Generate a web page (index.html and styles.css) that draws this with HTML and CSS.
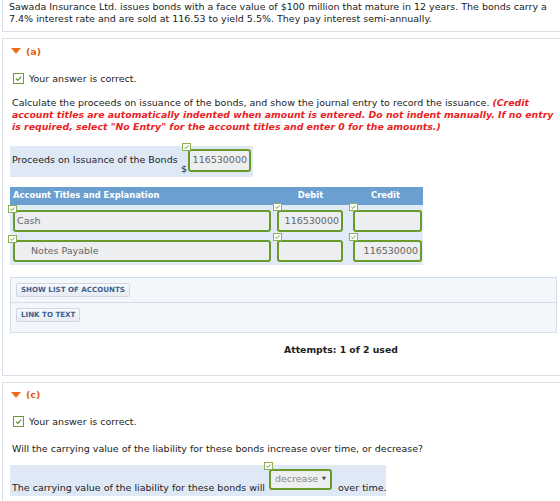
FILE: index.html
```html
<!DOCTYPE html>
<html>
<head>
    <title>Bonds Question</title>
    <link rel="stylesheet" href="styles.css">
</head>
<body>
    <div class="page">
        <!-- Question text -->
        <div class="panel intro">
            <p>Sawada Insurance Ltd. issues bonds with a face value of $100 million that mature in 12 years. The bonds carry a 7.4% interest rate and are sold at 116.53 to yield 5.5%. They pay interest semi-annually.</p>
        </div>

        <!-- Part (a) -->
        <div class="panel part">
            <div class="part-title"><span class="arrow"></span>(a)</div>
            <div class="status">
                <span class="checkbox"><svg viewBox="0 0 9 9"><path d="M2 4.6 L3.8 6.4 L7.2 2.6"/></svg></span>
                Your answer is correct.
            </div>
            <p class="prompt">Calculate the proceeds on issuance of the bonds, and show the journal entry to record the issuance. <em class="note">(Credit account titles are automatically indented when amount is entered. Do not indent manually. If no entry is required, select "No Entry" for the account titles and enter 0 for the amounts.)</em></p>

            <div class="answer-row proceeds">
                <span class="label">Proceeds on Issuance of the Bonds</span>
                <span class="dollar">$</span>
                <div class="field-wrap">
                    <span class="tag"><svg viewBox="0 0 7 6"><path d="M1.4 3.1 L2.9 4.4 L5.6 1.5"/></svg></span>
                    <div class="field num">116530000</div>
                </div>
            </div>

            <div class="journal">
                <div class="jhead">
                    <span class="col-title">Account Titles and Explanation</span>
                    <span class="col-amt">Debit</span>
                    <span class="col-amt">Credit</span>
                </div>
                <div class="jrow">
                    <div class="field-wrap acct">
                        <span class="tag"><svg viewBox="0 0 7 6"><path d="M1.4 3.1 L2.9 4.4 L5.6 1.5"/></svg></span>
                        <div class="field">Cash</div>
                    </div>
                    <div class="field-wrap debit">
                        <span class="tag"><svg viewBox="0 0 7 6"><path d="M1.4 3.1 L2.9 4.4 L5.6 1.5"/></svg></span>
                        <div class="field num">116530000</div>
                    </div>
                    <div class="field-wrap credit">
                        <span class="tag"><svg viewBox="0 0 7 6"><path d="M1.4 3.1 L2.9 4.4 L5.6 1.5"/></svg></span>
                        <div class="field num"></div>
                    </div>
                </div>
                <div class="jrow">
                    <div class="field-wrap acct">
                        <span class="tag"><svg viewBox="0 0 7 6"><path d="M1.4 3.1 L2.9 4.4 L5.6 1.5"/></svg></span>
                        <div class="field indent">Notes Payable</div>
                    </div>
                    <div class="field-wrap debit">
                        <span class="tag"><svg viewBox="0 0 7 6"><path d="M1.4 3.1 L2.9 4.4 L5.6 1.5"/></svg></span>
                        <div class="field num"></div>
                    </div>
                    <div class="field-wrap credit">
                        <span class="tag"><svg viewBox="0 0 7 6"><path d="M1.4 3.1 L2.9 4.4 L5.6 1.5"/></svg></span>
                        <div class="field num">116530000</div>
                    </div>
                </div>
            </div>

            <div class="links">
                <div class="link-row"><button class="btn">SHOW LIST OF ACCOUNTS</button></div>
                <div class="link-row"><button class="btn">LINK TO TEXT</button></div>
            </div>

            <div class="attempts">Attempts: 1 of 2 used</div>
        </div>

        <!-- Part (c) -->
        <div class="panel part">
            <div class="part-title"><span class="arrow"></span>(c)</div>
            <div class="status">
                <span class="checkbox"><svg viewBox="0 0 9 9"><path d="M2 4.6 L3.8 6.4 L7.2 2.6"/></svg></span>
                Your answer is correct.
            </div>
            <p class="prompt prompt-c">Will the carrying value of the liability for these bonds increase over time, or decrease?</p>

            <div class="answer-row choice">
                <span class="inline-text">The carrying value of the liability for these bonds will</span>
                <div class="field-wrap select-wrap">
                    <span class="tag"><svg viewBox="0 0 7 6"><path d="M1.4 3.1 L2.9 4.4 L5.6 1.5"/></svg></span>
                    <div class="select">decrease<span class="caret">&#9660;</span></div>
                </div>
                <span class="inline-text">over time.</span>
            </div>
        </div>
    </div>
</body>
</html>
```

FILE: styles.css
```css
* {
    box-sizing: border-box;
}

body {
    margin: 0;
    font-family: "DejaVu Sans", Verdana, sans-serif;
    font-size: 9.5px;
    line-height: 11.7px;
    color: #222;
    background: #fff;
    overflow: hidden;
}

.page {
    width: 570px;
    margin-left: 2px;
}

.panel {
    border: 1px solid #d9e0e8;
    background: #fff;
    margin-bottom: 6px;
}

.intro {
    border-top: 0;
    padding: 1px 6px 7px;
}

.intro p {
    margin: 0;
    width: 552px;
}

.part {
    padding: 6px 0 19px 7px;
}

.part-title {
    display: flex;
    align-items: center;
    gap: 5px;
    height: 12px;
    padding-left: 1px;
    color: #e0601c;
    font-size: 9.5px;
    font-weight: bold;
}

.arrow {
    width: 0;
    height: 0;
    border-left: 5px solid transparent;
    border-right: 5px solid transparent;
    border-top: 6px solid #f26b1d;
}

.status {
    display: flex;
    align-items: center;
    gap: 5px;
    height: 12px;
    margin-top: 15px;
    padding-left: 3px;
}

.checkbox {
    width: 11px;
    height: 11px;
    border: 1px solid #6c9b30;
    background: #fff;
    display: flex;
}

.checkbox svg {
    width: 9px;
    height: 9px;
    fill: none;
    stroke: #5a8f25;
    stroke-width: 1.2;
}

.prompt {
    margin: 13px 0 0 2px;
    width: 548px;
}

.prompt-c {
    margin-top: 15px;
}

.note {
    color: #e8231f;
    font-size: 9.35px;
    font-weight: bold;
}

.answer-row {
    display: flex;
    height: 31px;
    padding-left: 2px;
    background: #dfe9f6;
    white-space: nowrap;
}

.proceeds {
    width: 243px;
    margin-top: 13px;
}

.proceeds .label {
    width: 169px;
    align-self: center;
    margin-bottom: 2px;
}

.proceeds .dollar {
    width: 7px;
    align-self: flex-end;
    margin-bottom: 2px;
}

.proceeds .field-wrap {
    width: 63px;
    margin-top: 3px;
}

.proceeds .field {
    height: 23px;
}

.field-wrap {
    position: relative;
}

.tag {
    position: absolute;
    left: -6px;
    top: -6px;
    z-index: 1;
    width: 9px;
    height: 8px;
    border: 1px solid #8db050;
    background: #fff;
    display: flex;
}

.tag svg {
    width: 7px;
    height: 6px;
    fill: none;
    stroke: #6a9a2c;
    stroke-width: 1;
}

.field {
    height: 22px;
    border: 2px solid #6b9a2c;
    border-radius: 3px;
    background: #eceef0;
    color: #666;
    display: flex;
    align-items: center;
    padding: 0 2px;
}

.field.num {
    justify-content: flex-end;
}

.field.indent {
    padding-left: 16px;
}

.journal {
    width: 413px;
    margin-top: 10px;
    padding-bottom: 3px;
    background: #e1ebf7;
}

.jhead,
.jrow {
    display: grid;
    grid-template-columns: 263px 75px 75px;
}

.jhead {
    height: 18px;
    align-items: center;
    background: #6b9fd0;
    color: #fff;
    font-size: 8.4px;
    font-weight: bold;
}

.col-title {
    padding-left: 3px;
}

.col-amt {
    text-align: center;
}

.jrow {
    padding-top: 5px;
}

.jrow + .jrow {
    padding-top: 8px;
}

.acct {
    margin-left: 3px;
    width: 258px;
}

.debit {
    margin-left: 4px;
    width: 66px;
}

.credit {
    margin-left: 5px;
    width: 69px;
}

.acct .tag {
    left: -5px;
    top: -5px;
}

.debit .tag,
.credit .tag {
    left: -4px;
    top: -7px;
}

.links {
    width: 547px;
    margin-top: 12px;
    border: 1px solid #d5dde6;
    background: #f3f6fa;
}

.link-row {
    padding: 5px;
}

.link-row + .link-row {
    border-top: 1px solid #d5dde6;
    padding-bottom: 10px;
}

.btn {
    display: block;
    height: 14px;
    padding: 0 4px;
    font-family: "DejaVu Sans", Verdana, sans-serif;
    font-size: 7.1px;
    font-weight: bold;
    color: #3d5f8f;
    background: linear-gradient(#f8fafc, #e7ecf2);
    border: 1px solid #cfd8e2;
    border-radius: 2px;
}

.attempts {
    margin-top: 11px;
    padding-left: 274px;
    line-height: 12px;
    font-size: 9.3px;
    font-weight: bold;
}

.choice {
    width: 376px;
    margin-top: 11px;
}

.inline-text {
    flex: none;
    align-self: flex-end;
    margin-bottom: 3px;
}

.select-wrap {
    flex: none;
    margin: 4px 6px 0 4px;
}

.select-wrap .tag {
    left: -5px;
    top: -7px;
}

.select {
    width: 63px;
    height: 21px;
    border: 2px solid #6b9a2c;
    border-radius: 3px;
    background: #eceef0;
    color: #8a8a8a;
    font-size: 9.5px;
    display: flex;
    align-items: center;
    justify-content: space-between;
    padding: 0 4px 2px 4px;
}

.caret {
    font-size: 5px;
    color: #444;
}
```
